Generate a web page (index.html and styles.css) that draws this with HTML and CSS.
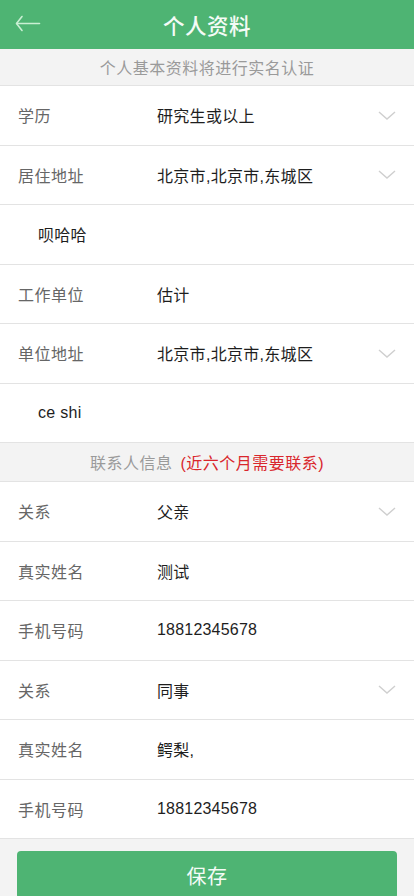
FILE: index.html
```html
<!DOCTYPE html>
<html lang="zh-CN">
<head>
<meta charset="utf-8">
<meta name="viewport" content="width=device-width, initial-scale=1">
<title>个人资料</title>
<link rel="stylesheet" href="styles.css">
</head>
<body>
<div class="page">
  <header class="topbar">
    <span class="back">
      <svg width="26" height="18" viewBox="0 0 26 18" fill="none" stroke="#c9efd3" stroke-width="1.6" stroke-linecap="round" stroke-linejoin="round">
        <path d="M7 1.5 L1.5 8.5 L7 15.5"/>
        <path d="M2 8.5 H24.5"/>
      </svg>
    </span>
    <h1 class="title">个人资料</h1>
  </header>

  <div class="notice">个人基本资料将进行实名认证</div>

  <div class="list">
    <div class="row">
      <span class="label">学历</span><span class="value">研究生或以上</span>
      <svg class="chev" viewBox="0 0 18 9" fill="none" stroke="#cfcfcf" stroke-width="1.4"><path d="M1 1 L9 8 L17 1"/></svg>
    </div>
    <div class="row">
      <span class="label">居住地址</span><span class="value">北京市,北京市,东城区</span>
      <svg class="chev" viewBox="0 0 18 9" fill="none" stroke="#cfcfcf" stroke-width="1.4"><path d="M1 1 L9 8 L17 1"/></svg>
    </div>
    <div class="row">
      <span class="addr">呗哈哈</span>
    </div>
    <div class="row">
      <span class="label">工作单位</span><span class="value">估计</span>
    </div>
    <div class="row">
      <span class="label">单位地址</span><span class="value">北京市,北京市,东城区</span>
      <svg class="chev" viewBox="0 0 18 9" fill="none" stroke="#cfcfcf" stroke-width="1.4"><path d="M1 1 L9 8 L17 1"/></svg>
    </div>
    <div class="row">
      <span class="addr">ce shi</span>
    </div>
  </div>

  <div class="section"><span>联系人信息</span><span class="warn">(近六个月需要联系)</span></div>

  <div class="list">
    <div class="row">
      <span class="label">关系</span><span class="value">父亲</span>
      <svg class="chev" viewBox="0 0 18 9" fill="none" stroke="#cfcfcf" stroke-width="1.4"><path d="M1 1 L9 8 L17 1"/></svg>
    </div>
    <div class="row">
      <span class="label">真实姓名</span><span class="value">测试</span>
    </div>
    <div class="row">
      <span class="label">手机号码</span><span class="value num">18812345678</span>
    </div>
    <div class="row">
      <span class="label">关系</span><span class="value">同事</span>
      <svg class="chev" viewBox="0 0 18 9" fill="none" stroke="#cfcfcf" stroke-width="1.4"><path d="M1 1 L9 8 L17 1"/></svg>
    </div>
    <div class="row">
      <span class="label">真实姓名</span><span class="value">鳄梨,</span>
    </div>
    <div class="row">
      <span class="label">手机号码</span><span class="value num">18812345678</span>
    </div>
  </div>

  <div class="actions">
    <button class="save" type="button">保存</button>
  </div>
</div>
</body>
</html>
```

FILE: styles.css
```css
* { box-sizing: border-box; }
html, body { margin: 0; padding: 0; }
body {
  background: #f3f3f3;
  font-family: "Liberation Sans", "Noto Sans CJK SC", sans-serif;
  font-size: 16px;
  color: #222;
}
.page { width: 414px; }

.topbar {
  height: 49px;
  background: #4eb473;
  display: flex;
  align-items: center;
  justify-content: center;
  position: relative;
}
.back {
  position: absolute;
  left: 15px;
  top: 15px;
  display: flex;
}
.title {
  margin: 0;
  font-size: 21.5px;
  font-weight: 500;
  color: #f4fbf6;
  letter-spacing: 0.5px;
}

.notice {
  height: 37px;
  display: flex;
  align-items: center;
  justify-content: center;
  color: #9a9a9a;
  letter-spacing: 0.5px;
  border-bottom: 1px solid #e3e3e3;
}

.list { background: #fff; }
.row {
  height: 59.5px;
  border-bottom: 1px solid #e3e3e3;
  display: flex;
  align-items: center;
  padding: 0 18px;
}
.label {
  width: 139px;
  color: #666;
  letter-spacing: 0.5px;
}
.value {
  flex: 1;
  color: #1e1e1e;
  letter-spacing: 0.3px;
}
.value.num { letter-spacing: 0.2px; }
.addr {
  padding-left: 20px;
  color: #1e1e1e;
  letter-spacing: 0.3px;
}
.chev {
  width: 18px;
  height: 9px;
  flex: none;
}

.section {
  height: 39px;
  display: flex;
  align-items: center;
  justify-content: center;
  color: #9a9a9a;
  letter-spacing: 0.5px;
  border-bottom: 1px solid #e3e3e3;
  gap: 8px;
}
.warn { color: #d9262c; }

.actions {
  padding: 12px 17px 20px;
}
.save {
  width: 100%;
  height: 48px;
  border: none;
  border-radius: 4px;
  background: #4eb473;
  color: #f4fbf6;
  font-family: "Liberation Sans", "Noto Sans CJK SC", sans-serif;
  font-size: 20px;
  letter-spacing: 0.5px;
  display: block;
}
```
